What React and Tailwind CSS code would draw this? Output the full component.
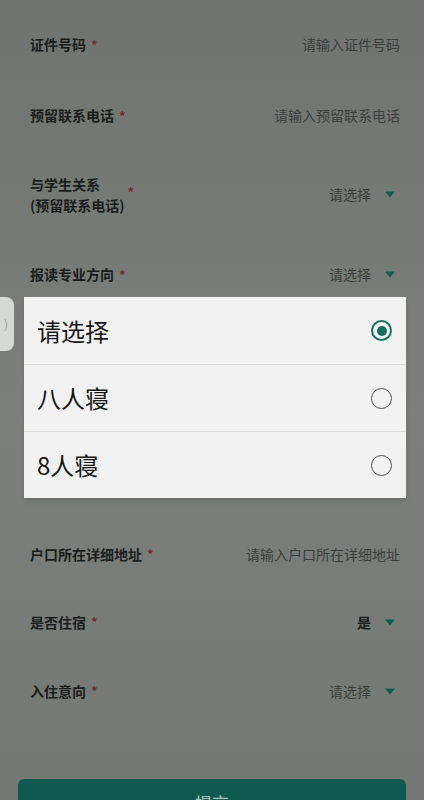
import React from 'react';

const Star = () => <span className="ml-[5px] text-[13px] font-bold text-[#7e2629]">*</span>;

const Caret = () => (
    <svg viewBox="0 0 10 7" className="ml-[14px] h-[7px] w-[10px]">
        <path d="M0 0.5 L10 0.5 L5 6.5 Z" fill="#0f5e54" />
    </svg>
);

const InputRow = ({ label, placeholder, h }) => (
    <div className={`flex items-center justify-between pl-[30px] pr-[24px] ${h}`}>
        <div className="flex items-center text-[14px] font-bold text-[#1b1d1c]">
            {label}
            <Star />
        </div>
        <span className="text-[14px] text-[#3b3f3d]">{placeholder}</span>
    </div>
);

const SelectRow = ({ label, value, dark, h }) => (
    <div className={`flex items-center justify-between pl-[30px] pr-[29px] ${h}`}>
        <div className="flex items-center text-[14px] font-bold text-[#1b1d1c]">
            {label}
            <Star />
        </div>
        <div className="flex items-center">
            <span className={dark ? 'text-[14px] font-bold text-[#1b1d1c]' : 'text-[14px] text-[#3b3f3d]'}>{value}</span>
            <Caret />
        </div>
    </div>
);

const Radio = ({ checked }) =>
    checked ? (
        <span className="flex h-[21px] w-[21px] items-center justify-center rounded-full border-[2.5px] border-[#17705f]">
            <span className="h-[10px] w-[10px] rounded-full bg-[#17705f]" />
        </span>
    ) : (
        <span className="h-[21px] w-[21px] rounded-full border-[1.5px] border-[#4d514f]" />
    );

const options = [
    { text: '请选择', checked: true },
    { text: '八人寝', checked: false },
    { text: '8人寝', checked: false },
];

export default function App() {
    return (
        <div
            className="relative h-[800px] w-[424px] overflow-hidden bg-[#747975]"
            style={{ fontFamily: '"Noto Sans CJK SC", "Noto Sans", sans-serif' }}
        >
            <div className="bg-gradient-to-b from-[#6f7470] via-[#7b807c] to-[#737874] pt-[9px]">
                <InputRow label="证件号码" placeholder="请输入证件号码" h="h-[71px]" />
                <InputRow label="预留联系电话" placeholder="请输入预留联系电话" h="h-[71px]" />
                <div className="flex h-[87px] items-center justify-between pl-[30px] pr-[29px]">
                    <div className="flex items-center">
                        <div className="text-[14px] font-bold leading-[21px] text-[#1b1d1c]">
                            与学生关系
                            <br />
                            (预留联系电话)
                        </div>
                        <span className="-mt-[6px] ml-[3px] text-[13px] font-bold text-[#7e2629]">*</span>
                    </div>
                    <div className="flex items-center">
                        <span className="text-[14px] text-[#3b3f3d]">请选择</span>
                        <Caret />
                    </div>
                </div>
                <SelectRow label="报读专业方向" value="请选择" h="h-[73px]" />
                {/* rows hidden behind the picker */}
                <div className="h-[209px]" />
                <InputRow label="户口所在详细地址" placeholder="请输入户口所在详细地址" h="h-[68px]" />
                <SelectRow label="是否住宿" value="是" dark h="h-[68px]" />
                <SelectRow label="入住意向" value="请选择" h="h-[70px]" />
                <div className="h-[53px]" />
                <div className="mx-[18px] flex h-[48px] items-center justify-center rounded-t-[6px] bg-[#0f5a50]">
                    <span className="text-[17px] text-[#a8c4bd]">提交</span>
                </div>
            </div>

            {/* side handle */}
            <div className="absolute left-0 top-[297px] flex h-[54px] w-[14px] items-center justify-center rounded-r-[8px] bg-[#d6d8d6]">
                <span className="-ml-[2px] text-[12px] text-[#9a9d9b]">)</span>
            </div>

            {/* picker dialog */}
            <div className="absolute left-[24px] top-[297px] w-[382px] bg-[#f1f2f1] shadow-md">
                {options.map((o, i) => (
                    <div
                        key={o.text}
                        className={`flex h-[67px] items-center justify-between pl-[13px] pr-[14px] ${i > 0 ? 'border-t border-[#d9dbd9]' : ''}`}
                    >
                        <span className="text-[24px] text-[#161716]">{o.text}</span>
                        <Radio checked={o.checked} />
                    </div>
                ))}
            </div>
        </div>
    );
}
